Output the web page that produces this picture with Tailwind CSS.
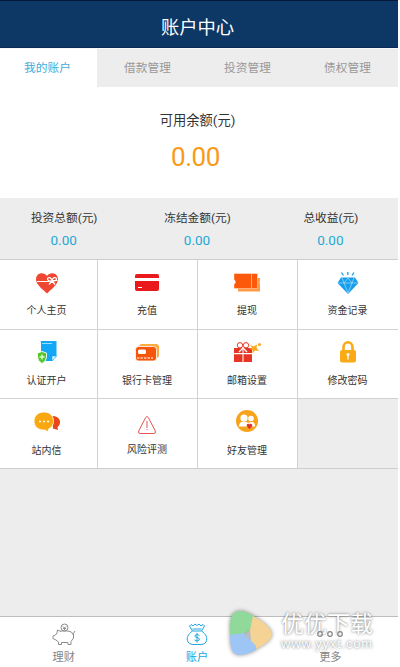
<!DOCTYPE html>
<html lang="zh-CN">
<head>
<meta charset="utf-8">
<title>账户中心</title>
<script src="https://cdn.jsdelivr.net/npm/@tailwindcss/browser@4"></script>
</head>
<body class="bg-white font-[Roboto,'Noto_Sans_CJK_SC',sans-serif]">
<div class="relative w-[398px] h-[667px] overflow-hidden bg-[#ededed]">
<div class="-ml-[3px] w-[401px] h-[667px] flex flex-col">
  <header class="h-[48px] shrink-0 bg-[#0d3866] border-t border-[#06173a] border-b border-b-[#092b56] flex items-center justify-center pt-[8px] text-[18.3px] text-white">账户中心</header>
  <nav class="h-[39px] shrink-0 border-t border-[#f8f8f8] grid grid-cols-[100px_100px_100px_101px] text-[11.7px] text-[#999] leading-[39px] text-center">
    <span class="bg-white text-[#42addb] pl-px">我的账户</span><span class="pl-px">借款管理</span><span class="pl-px">投资管理</span><span>债权管理</span>
  </nav>
  <section class="h-[111px] shrink-0 bg-white text-center">
    <div class="pt-[24px] leading-[20px] text-[13.3px] text-[#333]">可用余额(元)</div>
    <div class="pt-[10px] leading-[32px] text-[26px] tracking-[-0.4px] text-[#f99a17] pr-1">0.00</div>
  </section>
  <section class="h-[61px] shrink-0 grid grid-cols-3 pr-px text-center text-[#333]">
    <div class="pt-[10px]"><div class="text-[11.7px] leading-[20px] pl-px">投资总额(元)</div><div class="text-[13.500px] leading-[24px] text-[#22a9d5]">0.00</div></div>
    <div class="pt-[10px]"><div class="text-[11.7px] leading-[20px] pl-px">冻结金额(元)</div><div class="text-[13.500px] leading-[24px] text-[#22a9d5]">0.00</div></div>
    <div class="pt-[10px]"><div class="text-[11.7px] leading-[20px] pl-px">总收益(元)</div><div class="text-[13.500px] leading-[24px] text-[#22a9d5]">0.00</div></div>
  </section>
  <main class="shrink-0 grid grid-cols-[101px_100px_100px_100px] grid-rows-[70px_69px_69px] border-t border-b border-[#cfcfcf] text-[10px] text-[#333] text-center leading-[16px]">
    <div class="bg-white border-r border-b border-[#d2d2d2] pt-[9px] pr-px flex flex-col items-center">
      <svg class="w-[30px] h-[28px]" viewBox="0 0 30 28"><path d="M15 24.500C11 20.500 4 15.500 4 10.500C4 3.500 12 2.500 15 7C18 2.500 26 3.500 26 10.500C26 15.500 19 20.500 15 24.500Z" fill="#ef4832"/><path d="M5 12.500H18.500M21 11.500H25.500" fill="none" stroke="#fff" stroke-width="1"/><path d="M20 12C14.500 12.500 14.500 8.500 17.500 8.700Q19.500 9 20 12Q20.500 9 22.500 8.700C25.500 8.500 25.500 12.500 20 12L17 15.500M20 12L23 15.500" fill="none" stroke="#fff" stroke-width="1.200"/></svg>
      <span class="mt-[6px]">个人主页</span></div>
    <div class="bg-white border-r border-b border-[#d2d2d2] pt-[9px] pr-px flex flex-col items-center">
      <svg class="w-[30px] h-[28px]" viewBox="0 0 30 28"><path d="M3 9V7Q3 5 5 5H25Q27 5 27 7V9ZM3 12H27V20Q27 22 25 22H5Q3 22 3 20Z" fill="#e9191c"/><path d="M6 18.500H10" stroke="#fff" stroke-width="1"/></svg>
      <span class="mt-[6px]">充值</span></div>
    <div class="bg-white border-r border-b border-[#d2d2d2] pt-[9px] pr-px flex flex-col items-center">
      <svg class="w-[30px] h-[28px]" viewBox="0 0 30 28"><path d="M6 9H28V12Q27 13.500 28 15V22.500H6Z" fill="#ff9b45"/><path d="M2 4.500H25.500V19.500H2V15.500Q5 13 2 10.500Z" fill="#fc5a0a" stroke="#fff" stroke-width=".4"/><path d="M19.500 5V19" stroke="#ffc29c" stroke-width=".8"/></svg>
      <span class="mt-[6px]">提现</span></div>
    <div class="bg-white border-b border-[#d2d2d2] pt-[9px] pr-px flex flex-col items-center">
      <svg class="w-[30px] h-[28px]" viewBox="0 0 30 28"><path d="M8 8.500H22L25.500 14L15 25L4.500 14Z" fill="#169eed"/><path d="M5 14H25M11 14L15 24L19 14L15 9L11 14L9 9M19 14L21 9" stroke="#bfe6ff" stroke-width=".6" fill="none"/><path d="M14.800 3V6M8.500 3.500L10.500 6.500M21 3.500L19 6.500" stroke="#169eed" stroke-width="1.300"/></svg>
      <span class="mt-[6px]">资金记录</span></div>

    <div class="bg-white border-r border-b border-[#d2d2d2] pt-[9px] pr-px flex flex-col items-center">
      <svg class="w-[30px] h-[28px]" viewBox="0 0 30 28"><path d="M9 3Q8 2.500 9 2H24.500V17L20 22H9Z" fill="#12a8f5"/><path d="M10 4.500H20" stroke="#9cdcff" stroke-width="1"/><path d="M24.500 17H20V22Z" fill="#fff" stroke="#12a8f5" stroke-width=".7"/><path d="M10 12.500L14.500 14V18Q14.500 22 10 24.500Q5.500 22 5.500 18V14Z" fill="#55c52a" stroke="#fff" stroke-width=".9"/><path d="M10 15.500V20.500M7.500 18H12.500" stroke="#d9ffcb" stroke-width="1.400"/></svg>
      <span class="mt-[6px]">认证开户</span></div>
    <div class="bg-white border-r border-b border-[#d2d2d2] pt-[9px] pr-px flex flex-col items-center">
      <svg class="w-[30px] h-[28px]" viewBox="0 0 30 28"><rect x="7" y="5" width="20" height="14" rx="3" fill="#fcaa42"/><rect x="3.500" y="7.500" width="21" height="14.500" rx="3" fill="#f6560c" stroke="#fff" stroke-width=".8"/><rect x="6" y="10.500" width="8" height="4.500" rx="1.500" fill="#fff"/><path d="M5 19H21" stroke="#fff" stroke-width="1" stroke-dasharray="2.500 1"/></svg>
      <span class="mt-[6px]">银行卡管理</span></div>
    <div class="bg-white border-r border-b border-[#d2d2d2] pt-[9px] pr-px flex flex-col items-center">
      <svg class="w-[30px] h-[28px]" viewBox="0 0 30 28"><path d="M2 9H20V14H2ZM2 15.200H20V23H2Z" fill="#e73525"/><path d="M11 9V23" stroke="#fff" stroke-width="1"/><path d="M11 9L7 13M11 9L15 13" stroke="#fff" stroke-width="1.300"/><g fill="#fff" stroke="#e73525" stroke-width="1"><circle cx="8" cy="6.300" r="2.700"/><circle cx="14" cy="6.300" r="2.700"/></g><path d="M18 6L21.500 7.500L25 5.500L24.500 9L27 12L23 11.500L20.500 14.500L20.500 11L17 9.500L20 9Z" fill="#fba91b"/><circle cx="27.500" cy="5.500" r="1.500" fill="#fba91b"/></svg>
      <span class="mt-[6px]">邮箱设置</span></div>
    <div class="bg-white border-b border-[#d2d2d2] pt-[9px] pr-px flex flex-col items-center">
      <svg class="w-[30px] h-[28px]" viewBox="0 0 30 28"><path d="M10.500 12V8.500C10.500 1.500 19.500 1.500 19.500 8.500V12" fill="none" stroke="#faaa15" stroke-width="2.600"/><rect x="7" y="11" width="16" height="12.500" rx="2" fill="#faaa15"/><circle cx="15" cy="15.500" r="1.500" fill="#fff"/><path d="M15 15.500V20.500" stroke="#fff" stroke-width="1.300"/></svg>
      <span class="mt-[6px]">修改密码</span></div>

    <div class="bg-white border-r border-[#d2d2d2] pt-[10px] pr-px flex flex-col items-center">
      <svg class="w-[30px] h-[28px]" viewBox="0 0 30 28"><path d="M20 7C29 7 30 15 25.500 18L26 21L21 19.500Z" fill="#e94518"/><path d="M12 3C18 3 21.500 7 21.500 12C21.500 16 19.500 19 16.500 20L16 23L13 21C6 21.500 2 17.500 2 12C2 7 6 3 12 3Z" fill="#faa812" stroke="#fff" stroke-width=".8"/><path d="M7 12.500H9M11 12.500H13M15 12.500H17" stroke="#fff" stroke-width="1.600"/></svg>
      <span class="mt-[6px]">站内信</span></div>
    <div class="bg-white border-r border-[#d2d2d2] pt-[10px] pr-px flex flex-col items-center">
      <svg class="w-[30px] h-[28px]" viewBox="0 0 30 28"><path d="M13.700 8.500Q15 6.500 16.300 8.500L23.300 22Q24 24.500 22 24.500H8Q6 24.500 6.700 22Z" fill="none" stroke="#e65355" stroke-width="1"/><path d="M15 12V19M15 20.200V21.200" stroke="#e65355" stroke-width="1"/></svg>
      <span class="mt-[5px]">风险评测</span></div>
    <div class="bg-white border-r border-[#d2d2d2] pt-[10px] pr-px flex flex-col items-center">
      <svg class="w-[30px] h-[28px]" viewBox="0 0 30 28"><circle cx="15" cy="12" r="11" fill="#f7a31b"/><circle cx="12" cy="9" r="3.600" fill="#fff"/><circle cx="19" cy="9.500" r="2.800" fill="#fff"/><path d="M7 17.500Q7 12.500 12 12.500Q15 12.500 16 14Q23 11 23 17.500Z" fill="#fff"/><path d="M17.500 20C15.500 18 14 16.500 15 15.200C16 14 17.500 15 17.500 15.700C17.500 15 19 14 20 15.200C21 16.500 19.500 18 17.500 20Z" fill="#df3429"/></svg>
      <span class="mt-[6px]">好友管理</span></div>
    <div></div>
  </main>
  <footer class="mt-auto h-[51px] shrink-0 border-t border-[#bdbdbd] bg-white grid grid-cols-3 pr-px text-[11.2px] leading-[16px] text-[#858585] text-center">
    <div class="pt-[5px] flex flex-col items-center">
      <svg class="w-[26px] h-[26px]" viewBox="0 0 26 26" fill="none" stroke="#8d8d8d" stroke-width="1"><circle cx="13.500" cy="5.500" r="3.500"/><path d="M12 4.500L13.500 6L15 4.500M13.500 6V8M12 6.500H15"/><path d="M10 9.500L6.500 8L6 11L4.500 13L2 14V16.500L5 18L7.500 20V22.500H10.500V20.500H17V22.500H20V19.500L22.500 16V11.500L24 9M22.500 13Q21 9 17 9H9.500"/></svg>
      <span class="mt-[2px]">理财</span></div>
    <div class="pt-[5px] flex flex-col items-center text-[#20a7df]">
      <svg class="w-[26px] h-[26px]" viewBox="0 0 26 26" fill="none" stroke="#20a7df" stroke-width="1"><path d="M8.500 9L5.500 4L7 2.500L9 4L11 2L13 3.500L15 2L17 4L19 2.500L20.500 4L17.500 9M8.500 7H17.500M8.500 9H17.500C22 12 24 16 22 20Q20.500 22.500 17 22.500H9Q5.500 22.500 4 20C2 16 4 12 8.500 9Z"/><path d="M15.500 13.500Q13 11.500 11.200 13.200C9.500 16.500 16.500 14.500 15.200 18Q13.500 20 10.500 18M13 11V20.500"/></svg>
      <span class="mt-[2px]">账户</span></div>
    <div class="pt-[5px] flex flex-col items-center">
      <svg class="w-[30px] h-[26px]" viewBox="0 0 30 26" fill="none"><path d="M0 0H1" /></svg>
      <span class="mt-[2px]">更多</span></div>
  </footer>
</div>
<div class="absolute left-[226px] top-[607px] w-[160px] h-[52px] flex">
  <svg class="w-[50px] h-[52px] shrink-0 drop-shadow-[0_0_2px_rgba(0,0,0,0.45)]" viewBox="0 0 50 52"><path d="M4 26Q3 9 8 6Q14 1 26 8L29 10L24 23L16 28L4 31Z" fill="#91d99b"/><path d="M27 9Q44 18 46 27Q46 34 30 42L23 35L24 23Z" fill="#f4d394"/><path d="M4 28L18 26L30 39V43Q16 50 9 47Q4 44 4 28Z" fill="#9dc5f5"/><path d="M17 28L24 23L25 33Z" fill="#b7bdc2"/></svg>
  <div class="ml-[5px] pt-[4px] text-white whitespace-nowrap [text-shadow:0_0_3px_rgba(0,0,0,0.5),0_0_1px_rgba(0,0,0,0.15)]">
    <div class="text-[23px] leading-[27px]">优优下载</div>
    <div class="-mt-[2px] font-['Liberation_Sans',sans-serif] text-[13px] tracking-[.8px] leading-[15px]">www.yyxt.com</div>
  </div>
</div>
<svg class="absolute left-[315px] top-[621px] w-[30px] h-[26px]" viewBox="0 0 30 26" fill="none" stroke="#858585" stroke-width="1.200"><circle cx="5" cy="13" r="2.300"/><circle cx="15" cy="13" r="2.300"/><circle cx="25" cy="13" r="2.300"/></svg>
</div>
</body>
</html>
